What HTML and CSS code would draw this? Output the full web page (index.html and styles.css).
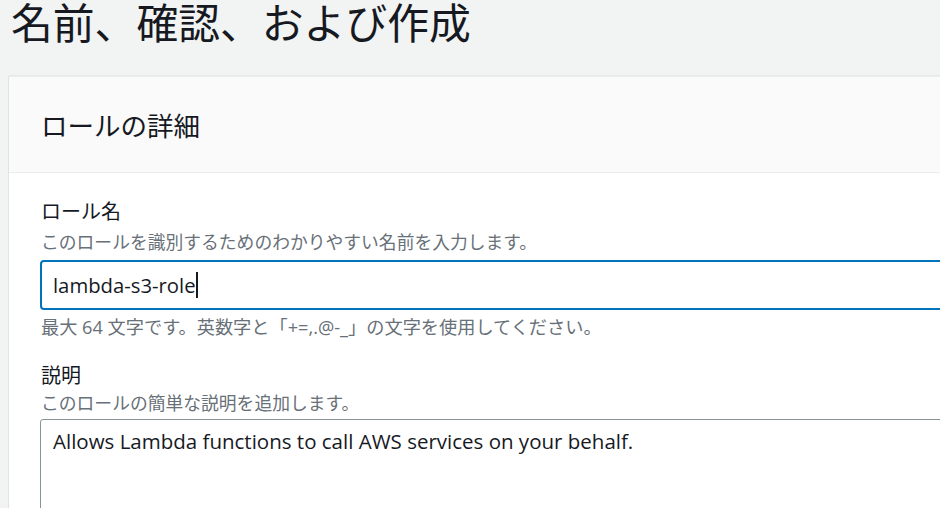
FILE: index.html
```html
<!DOCTYPE html>
<html lang="ja">
<head>
<meta charset="utf-8">
<title>名前、確認、および作成</title>
<link rel="stylesheet" href="styles.css">
</head>
<body>
<div class="page">
  <h1 class="page-title">名前、確認、および作成</h1>
  <section class="card">
    <header class="card-header">
      <h2 class="card-title">ロールの詳細</h2>
    </header>
    <div class="card-body">
      <div class="field">
        <div class="label">ロール名</div>
        <div class="desc">このロールを識別するためのわかりやすい名前を入力します。</div>
        <div class="input input-focused" role="textbox"><span class="value">lambda-s3-role</span><span class="caret"></span></div>
        <div class="hint">最大 64 文字です。英数字と「+=,.@-_」の文字を使用してください。</div>
      </div>
      <div class="field field-second">
        <div class="label">説明</div>
        <div class="desc">このロールの簡単な説明を追加します。</div>
        <div class="textarea" role="textbox">Allows Lambda functions to call AWS services on your behalf.</div>
      </div>
    </div>
  </section>
</div>
</body>
</html>
```
FILE: styles.css
```css
html, body {
  margin: 0;
  padding: 0;
}
body {
  background: #f2f3f3;
  overflow: hidden;
  width: 940px;
  height: 508px;
  font-family: "Open Sans", "Noto Sans CJK JP", sans-serif;
  color: #16191f;
}
.page {
  width: 1200px;
}
.page-title {
  margin: 0;
  padding-left: 11px;
  height: 76px;
  font-family: "Noto Sans CJK JP", sans-serif;
  font-weight: 400;
  font-size: 41.8px;
  line-height: 44px;
  margin-top: -1px;
  padding-top: 0;
  box-sizing: border-box;
  height: 77px;
}
.card {
  margin-left: 9px;
  background: #ffffff;
  border-top: 1px solid #eaeded;
  box-shadow: -1px 0 0 #e1e4e4, 0 -1px 1px rgba(0,0,0,0.04);
}
.card-header {
  height: 95px;
  background: #fafafa;
  border-bottom: 1px solid #eaeded;
  display: flex;
  align-items: center;
  padding-left: 32px;
}
.card-title {
  margin: 0;
  font-family: "Noto Sans CJK JP", sans-serif;
  font-weight: 400;
  font-size: 26.5px;
  line-height: 32px;
}
.card-body {
  padding: 24px 0 0 31px;
}
.label {
  font-family: "Noto Sans CJK JP", sans-serif;
  font-size: 20px;
  line-height: 28px;
  padding-left: 1px;
}
.desc, .hint {
  font-size: 17.8px;
  line-height: 24px;
  color: #687078;
  padding-left: 1px;
}
.desc {
  margin-top: 5px;
}
.input {
  margin-top: 6px;
  height: 50px;
  box-sizing: border-box;
  border: 2px solid #0073bb;
  border-radius: 4px;
  background: #fff;
  display: flex;
  align-items: center;
  padding-left: 11px;
  font-size: 20.3px;
}
.caret {
  display: inline-block;
  width: 2px;
  height: 26px;
  background: #16191f;
}
.hint {
  margin-top: 5px;
  font-size: 18.2px;
}
.field-second {
  margin-top: 22px;
}
.field-second .desc {
  margin-top: 2px;
}
.textarea {
  margin-top: 4px;
  height: 120px;
  box-sizing: border-box;
  border: 1px solid #879596;
  border-radius: 3px;
  background: #fff;
  padding: 8px 12px 9px;
  font-size: 20.5px;
  line-height: 27px;
}
```
